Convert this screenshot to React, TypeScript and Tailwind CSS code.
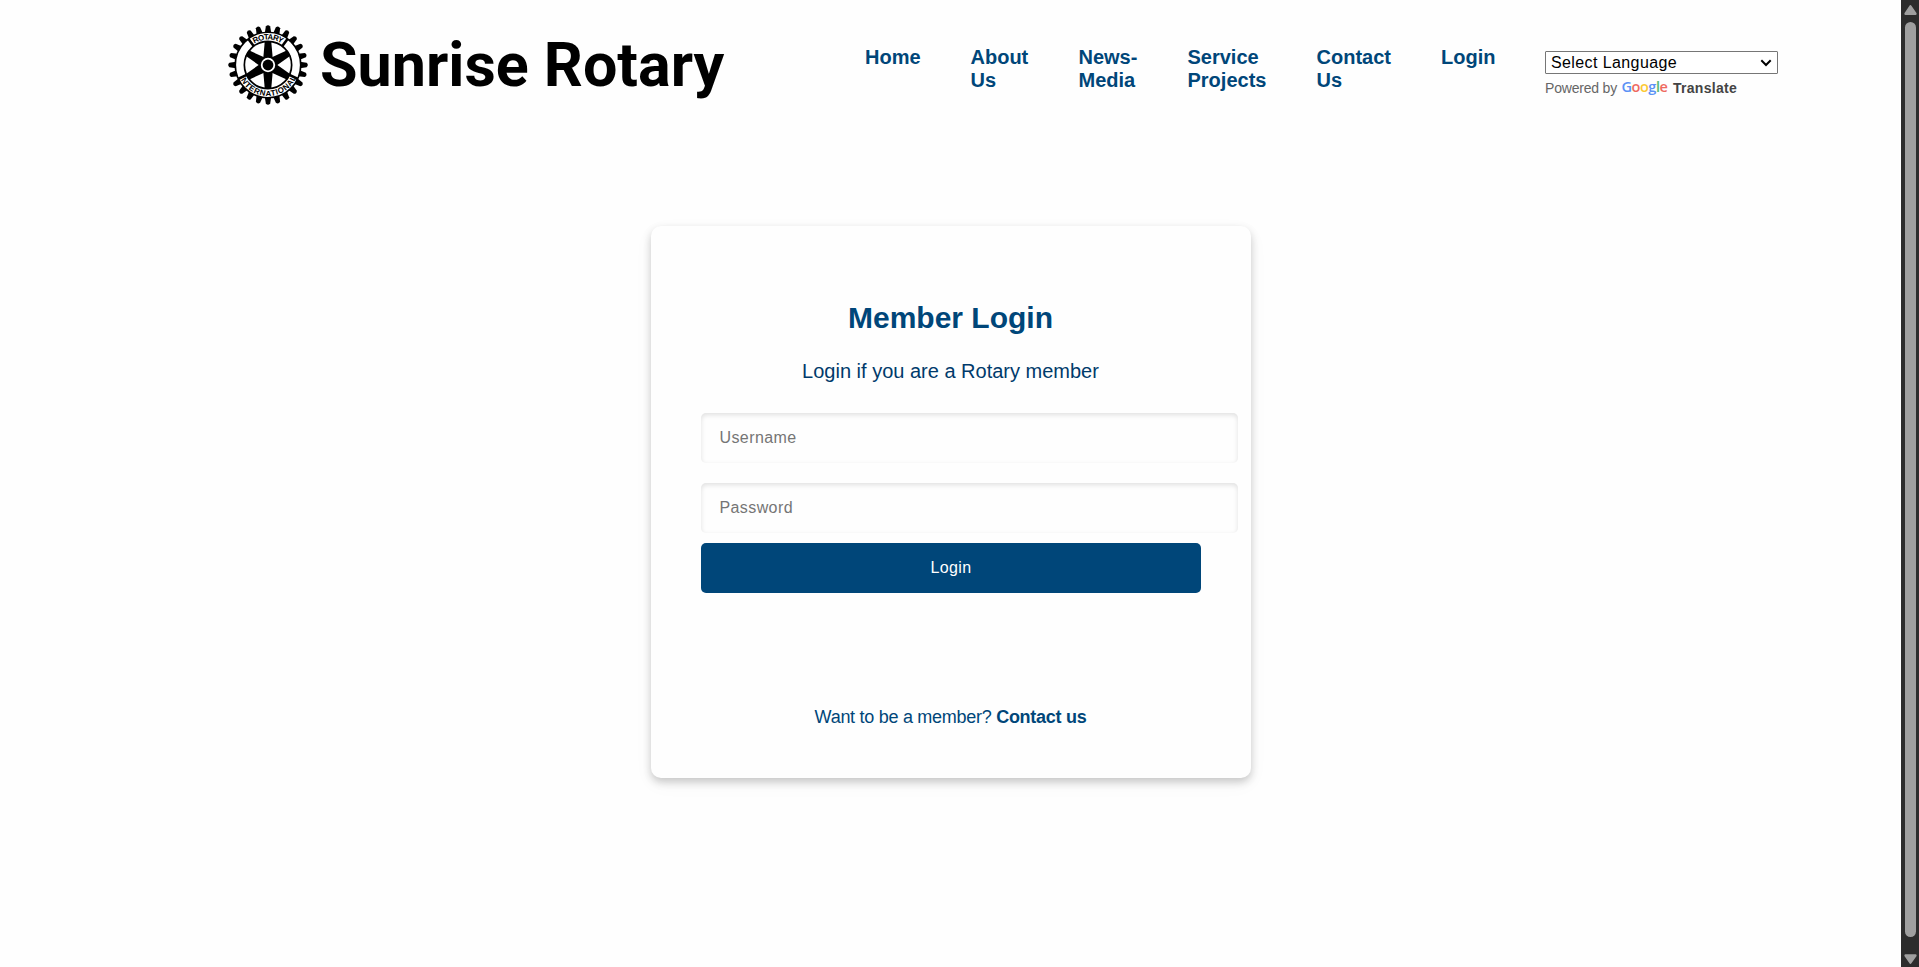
const links = [
  { lines: ["Home"], w: "w-[55.5px]" },
  { lines: ["About", "Us"], w: "w-[58px]" },
  { lines: ["News-", "Media"], w: "w-[59px]" },
  { lines: ["Service", "Projects"], w: "w-[79px]" },
  { lines: ["Contact", "Us"], w: "w-[74.5px]" },
  { lines: ["Login"], w: "w-[54px]" },
];

function Wheel() {
  const teeth = Array.from({ length: 24 }, (_, i) => i * 15);
  const spokes = [0, 60, 120, 180, 240, 300];
  return (
    <svg viewBox="-41 -41 82 82" className="size-[82px] shrink-0">
      {teeth.map((a) => (
        <path key={a} d="M-3.2 -32 L-2.2 -38.6 Q0 -41 2.2 -38.6 L3.2 -32 Z" transform={`rotate(${a})`} />
      ))}
      <circle r="33.6" />
      <circle r="28.2" fill="none" stroke="#fff" strokeWidth="7.4" />
      {[37, 115, 245, 323].map((a) => (
        <rect key={a} x="-1.3" y="-32.5" width="2.6" height="9" transform={`rotate(${a})`} />
      ))}
      <circle r="22.8" fill="#fff" />
      {spokes.map((a) => (
        <path key={a} d="M-4.8 -6 L-3.2 -24 L3.2 -24 L4.8 -6 Z" transform={`rotate(${a})`} />
      ))}
      <circle r="7.2" fill="#fff" />
      <circle r="5.4" />
      <path id="arcTop" d="M-25.4 0 A25.4 25.4 0 0 1 25.4 0" fill="none" />
      <path id="arcBottom" d="M-31 0 A31 31 0 0 0 31 0" fill="none" />
      <text fontSize="8" fontWeight="700" textAnchor="middle" className="font-['Liberation_Sans',sans-serif]">
        <textPath href="#arcTop" startOffset="50%" textLength="29">ROTARY</textPath>
      </text>
      <text fontSize="8" fontWeight="700" textAnchor="middle" className="font-['Liberation_Sans',sans-serif]">
        <textPath href="#arcBottom" startOffset="50%" textLength="72">INTERNATIONAL</textPath>
      </text>
    </svg>
  );
}

export default function App() {
  return (
    <div className="flex h-[967px] w-full overflow-hidden bg-[#fefefe] font-['Liberation_Sans',Arial,sans-serif] text-[#004679]">
      <div className="flex min-w-0 flex-1 flex-col">
        <header className="flex h-[226px] items-start">
          <div className="ml-[226.5px] mt-6 flex h-[82px] w-[638.5px] items-center">
            <Wheel />
            <span className="ml-[11.5px] whitespace-nowrap font-['Roboto',sans-serif] text-[61px] font-bold leading-[82px] text-black">
              Sunrise Rotary
            </span>
          </div>
          <nav className="mt-[46px] flex gap-[50px] text-[20px] font-bold leading-[23px]">
            {links.map((l) => (
              <a key={l.lines.join()} className={`${l.w} shrink-0 whitespace-nowrap`}>
                {l.lines.map((t) => (
                  <span key={t} className="block">{t}</span>
                ))}
              </a>
            ))}
          </nav>
          <div className="ml-[50px] mt-[51px] w-[233px] text-black">
            <div className="flex h-[23px] items-center justify-between rounded-[1px] border border-[#767676] bg-white pl-[5px] pr-1 text-[16px] leading-[21px]">
              <span className="tracking-[0.4px]">Select Language</span>
              <svg viewBox="0 0 12 8" className="mr-[1px] h-2 w-3">
                <path d="M1.3 1.3 L6 6 L10.7 1.3" fill="none" stroke="black" strokeWidth="2" />
              </svg>
            </div>
            <div className="mt-[6px] flex items-center whitespace-nowrap text-[14px] leading-4 text-[#666]">
              <span className="tracking-[-0.2px]">Powered by</span>
              <span className="relative -top-px ml-[4.5px] flex font-['Open_Sans',sans-serif] text-[14.5px] font-semibold tracking-[-0.45px]">
                <span className="text-[#5b92f5]">G</span>
                <span className="text-[#ee6a5f]">o</span>
                <span className="text-[#fcc934]">o</span>
                <span className="text-[#5b92f5]">g</span>
                <span className="text-[#57b974]">l</span>
                <span className="text-[#ee6a5f]">e</span>
              </span>
              <span className="ml-[5.5px] font-bold tracking-[0.3px] text-[#444]">Translate</span>
            </div>
          </div>
        </header>

        <main className="ml-[651px] flex h-[552px] w-[600px] flex-col items-center rounded-[10px] bg-[#fefefe] px-[50px] pt-[73px] shadow-[0_4px_8px_0_rgba(0,0,0,0.2),0_6px_20px_0_rgba(0,0,0,0.04)]">
          <h2 className="-ml-px text-[30px] font-bold leading-[37px]">Member Login</h2>
          <p className="-ml-px mt-[24px] text-[20px] leading-[23px] text-[#003a6b]">Login if you are a Rotary member</p>
          <form className="mt-[30px] flex w-[500px] flex-col">
            <input
              placeholder="Username"
              className="h-[50px] w-[537px] rounded-[5px] bg-transparent px-[18.5px] text-[16px] tracking-[0.4px] shadow-[inset_0_2px_5px_rgba(0,0,0,0.12)] placeholder:text-[#757575]"
            />
            <input
              placeholder="Password"
              className="mt-5 h-[50px] w-[537px] rounded-[5px] bg-transparent px-[18.5px] text-[16px] tracking-[0.4px] shadow-[inset_0_2px_5px_rgba(0,0,0,0.12)] placeholder:text-[#757575]"
            />
            <button type="button" className="mt-[10px] h-[50px] w-[500px] rounded-[5px] bg-[#004679] text-[16px] tracking-[0.4px] text-white">
              Login
            </button>
          </form>
          <p className="-ml-px mt-[113px] text-[18px] leading-[23px] tracking-[-0.28px]">
            Want to be a member? <b>Contact us</b>
          </p>
        </main>
      </div>

      <div className="flex h-full w-[18px] flex-col items-center bg-[#2c2c2c]">
        <svg viewBox="0 0 18 22" className="h-[22px] w-[18px]">
          <path d="M9.4 5 Q10 5 10.6 6 L15.6 13.3 Q16 15 14.6 15 H4.4 Q3 15 3.4 13.3 L8.3 6 Q8.8 5 9.4 5Z" fill="#9f9f9f" />
        </svg>
        <div className="ml-[1px] w-[11px] flex-1 rounded-full bg-[#9f9f9f]" />
        <svg viewBox="0 0 18 30" className="h-[30px] w-[18px]">
          <path d="M9.4 27 Q8.8 27 8.3 26 L3.4 19 Q3 17.3 4.4 17.3 H14.6 Q16 17.3 15.6 19 L10.6 26 Q10 27 9.4 27Z" fill="#9f9f9f" />
        </svg>
      </div>
    </div>
  );
}
